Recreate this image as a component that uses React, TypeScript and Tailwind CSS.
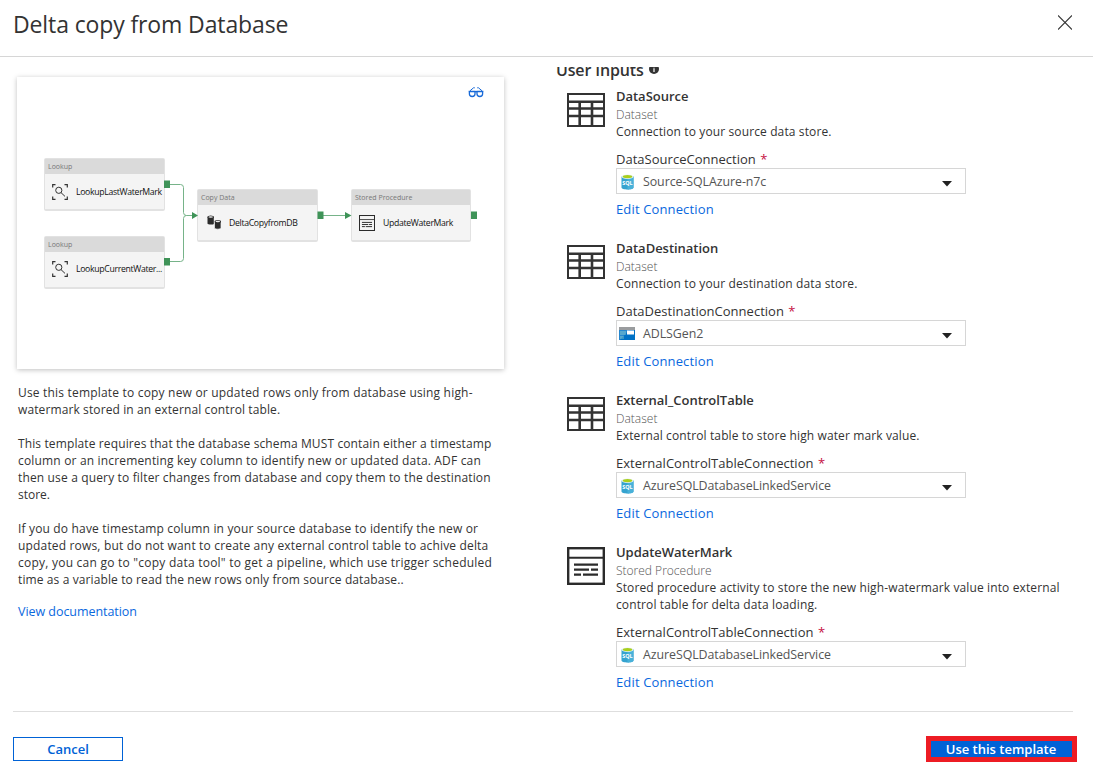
import React from "react";

const TableIcon = () => (
  <svg width="38" height="34" viewBox="0 0 38 34" fill="none" stroke="#333">
    <rect x="1" y="1" width="36" height="32" strokeWidth="2" />
    <path d="M0 8.800H38M0 15.500H38M0 23H38M12.700 8V34M25 8V34" strokeWidth="2.600" />
  </svg>
);

const ProcedureIcon = ({ size = 38 }: { size?: number }) => (
  <svg width={size} height={size} viewBox="0 0 38 38" fill="none" stroke="#2b2b2b" strokeWidth="2.4">
    <rect x="1.2" y="1.2" width="35.6" height="35.6" />
    <path d="M1 10.8H37" strokeWidth="2" />
    <path d="M7 17.6H31M7 22.6H22M24 22.6H31M7 27.6H14M16 27.6H31" strokeWidth="2.3" />
  </svg>
);

const SqlIcon = () => (
  <svg width="13" height="16" viewBox="0 0 13 16" className="ml-[4px] mr-[9px] mt-[2px]">
    <path d="M0.5 2.5V13.5C0.5 14.7 3.2 15.5 6.5 15.5S12.5 14.7 12.5 13.5V2.5Z" fill="#35a3cf" />
    <path d="M6.5 2.5V15.5C9.8 15.5 12.5 14.7 12.5 13.5V2.5Z" fill="#48b1d9" />
    <ellipse cx="6.5" cy="2.7" rx="6" ry="2.2" fill="#e6f1f3" />
    <ellipse cx="6.5" cy="2.6" rx="4.8" ry="1.6" fill="#a9cf1c" />
    <text x="6.5" y="10.8" textAnchor="middle" fontSize="5.4" fontWeight="700" fill="#fff" fontFamily="Open Sans, sans-serif">SQL</text>
  </svg>
);

const LakeIcon = () => (
  <svg width="16" height="13" viewBox="0 0 16 13" className="ml-[2px] mr-[8px] mt-px">
    <rect width="16" height="13" fill="#0072c6" />
    <rect width="16" height="3" fill="#9a9c9e" />
    <rect x="8" y="3.5" width="7" height="4" fill="#fff" />
    <rect x="1" y="4" width="6" height="4" fill="#3999c6" />
    <rect x="1" y="9" width="4" height="3" fill="#3999c6" />
    <path d="M0 13V3L10 3L1 13Z" fill="#fff" opacity=".15" />
  </svg>
);

const LookupIcon = () => (
  <svg width="16" height="16" viewBox="0 0 16 16" fill="none" stroke="#333" strokeWidth="1">
    <path d="M.7 3.5V.7H3.5M12.5.7H15.3V3.5M15.3 12.5V15.3H12.5M3.5 15.3H.7V12.5" strokeWidth="1.2" />
    <circle cx="6.8" cy="6.3" r="3.1" />
    <path d="M9 8.6L13 12.4" />
  </svg>
);

const CopyIcon = () => (
  <svg width="15" height="15" viewBox="0 0 15 15" fill="#2b2b2b">
    <path d="M.5 2V8.5C.5 9.8 6.5 10 6.8 8.7V2Z" />
    <ellipse cx="3.7" cy="2" rx="3.2" ry="1.5" />
    <ellipse cx="3.7" cy="2" rx="2.3" ry=".8" fill="#eee" />
    <path d="M7.5 6.5V13C7.5 14.5 14 14.5 14 13V6.5Z" stroke="#f4f4f4" strokeWidth=".7" />
    <ellipse cx="10.8" cy="6.5" rx="3.2" ry="1.5" />
    <ellipse cx="10.8" cy="6.5" rx="2.3" ry=".8" fill="#eee" />
  </svg>
);

const Node = ({ pos, kind, name, icon }: { pos: string; kind: string; name: string; icon: React.ReactNode }) => (
  <div className={`absolute rounded-[2px] border border-b-2 border-[#e2e2e2] bg-[#f4f4f4] ${pos}`}>
    <div className="h-[15px] bg-[#dadada] pl-[3px] text-[7px] leading-[15px] text-[#777]">{kind}</div>
    <div className="flex h-[35px] items-center pl-[7px]">
      <span className="flex w-[24px] shrink-0">{icon}</span>
      <span className="whitespace-nowrap pt-[2px] text-[8.7px] tracking-[-0.32px] text-[#111]">{name}</span>
    </div>
  </div>
);

interface InputProps {
  title: string;
  kind: string;
  desc: React.ReactNode;
  label: string;
  value: string;
  valueIcon: React.ReactNode;
  icon: React.ReactNode;
}

const InputBlock = ({ title, kind, desc, label, value, valueIcon, icon }: InputProps) => (
  <section className="flex pb-[22px]">
    <div className="w-[49px] shrink-0 pt-[5px]">{icon}</div>
    <div className="whitespace-nowrap">
      <h3 className="h-[18px] text-[13px] font-semibold leading-[17px] tracking-[-0.03px] text-[#333]">{title}</h3>
      <p className="h-[17px] text-[12px] font-light leading-[17px] text-[#555]">{kind}</p>
      <p className="text-[12px] leading-[17px] tracking-[0.12px] text-[#333]">{desc}</p>
      <div className="mt-[11px] h-[17px] text-[13px] leading-[17px] tracking-[0.02px] text-[#333]">
        {label} <span className="ml-[1px] text-[#c50f3f]">*</span>
      </div>
      <div className="flex h-[26px] w-[350px] items-center border border-[#d6d6d6]">
        {valueIcon}
        <span className="flex-1 text-[12.4px] leading-[17px] tracking-[-0.07px] text-[#555]">{value}</span>
        <svg width="10" height="6" viewBox="0 0 10 6" className="mr-[13px] mt-[5px]">
          <path d="M0 0H10L5 5.5Z" fill="#222" />
        </svg>
      </div>
      <a className="mt-[7px] block text-[13px] leading-[17px] tracking-[0.14px] text-[#0a68de]">Edit Connection</a>
    </div>
  </section>
);

export default function App() {
  return (
    <div className="flex h-[779px] w-[1093px] flex-col overflow-hidden bg-white font-['Open_Sans','Noto_Sans',sans-serif]">
      <header className="flex h-[57px] shrink-0 items-center justify-between border-b border-[#d6d6d6] pb-[8px] pl-[13px] pr-[21px]">
        <h1 className="whitespace-nowrap text-[23px] leading-[32px] tracking-[-0.12px] text-[#333]">Delta copy from Database</h1>
        <svg width="14" height="15" viewBox="0 0 14 15" stroke="#333" strokeWidth="1.1" className="mb-[3px]">
          <path d="M0 .5L14 14.5M14 .5L0 14.5" />
        </svg>
      </header>

      <main className="flex h-[654px] shrink-0">
        <div className="w-[556px] shrink-0 pl-[17px] pt-[20px]">
          <div className="relative h-[292px] w-[487px] bg-white shadow-[0_1px_5px_rgba(0,0,0,0.25)]">
            <svg className="absolute left-[451px] top-[10px]" width="16" height="11" viewBox="0 0 16 11" fill="none" stroke="#1769d8" strokeWidth="1.3">
              <path d="M.6 4.5H7V7C7 10.3 1.4 10.3 1.4 7V4.5M15.4 4.5H9V7C9 10.3 14.6 10.3 14.6 7V4.5M7 5C7.5 4.4 8.5 4.4 9 5" />
              <path d="M2 3.8L5.5.8H6.8M14 3.8L10.5.8H9.2" strokeWidth="1" />
            </svg>
            <Node pos="left-[27px] top-[81px] w-[121px]" kind="Lookup" name="LookupLastWaterMark" icon={<LookupIcon />} />
            <Node pos="left-[27px] top-[158.500px] w-[121px]" kind="Lookup" name="LookupCurrentWater..." icon={<LookupIcon />} />
            <Node pos="left-[180px] top-[112px] w-[121px]" kind="Copy Data" name="DeltaCopyfromDB" icon={<span className="pl-[2px]"><CopyIcon /></span>} />
            <Node pos="left-[334px] top-[112px] w-[120px]" kind="Stored Procedure" name="UpdateWaterMark" icon={<ProcedureIcon size={16} />} />
            <svg className="absolute left-0 top-0" width="487" height="292" viewBox="0 0 487 292" fill="none" stroke="#76b389">
              <path d="M153 107.5H163.500Q166.500 107.500 166.500 110.500V135.500Q166.500 138.500 169.500 138.500H175M153 184.500H163.500Q166.500 184.500 166.500 181.500V141.500Q166.500 138.500 169.500 138.500M306 138.500H328" />
              <g fill="#3f9358" stroke="none">
                <path d="M147 103.500h6v7.500h-6zM147 181h6v7.500h-6zM300.500 134.500h6v7.500h-6zM454 134.500h6v7.500h-6zM175 135L181 138.500L175 142zM328 135L334.500 138.500L328 142z" />
              </g>
            </svg>
          </div>
          <div className="mt-[15px] whitespace-nowrap pl-px text-[12px] leading-[17px] text-[#333]">
            <p>
              <span className="tracking-[0.19px]">Use this template to copy new or updated rows only from database using high-</span>
              <br />
              <span className="tracking-[0.11px]">watermark stored in an external control table.</span>
            </p>
            <p className="mt-[17px]">
              <span className="tracking-[0.12px]">This template requires that the database schema MUST contain either a timestamp</span>
              <br />
              <span className="tracking-[0.17px]">column or an incrementing key column to identify new or updated data. ADF can</span>
              <br />
              <span className="tracking-[0.15px]">then use a query to filter changes from database and copy them to the destination</span>
              <br />
              store.
            </p>
            <p className="mt-[17px]">
              <span className="tracking-[0.165px]">If you do have timestamp column in your source database to identify the new or</span>
              <br />
              <span className="tracking-[0.17px]">updated rows, but do not want to create any external control table to achive delta</span>
              <br />
              <span className="tracking-[0.235px]">copy, you can go to "copy data tool" to get a pipeline, which use trigger scheduled</span>
              <br />
              <span className="tracking-[0.11px]">time as a variable to read the new rows only from source database..</span>
            </p>
            <a className="mt-[15px] block text-[12.5px] tracking-[-0.05px] text-[#0a68de]">View documentation</a>
          </div>
        </div>

        <div className="mt-[10px] flex-1 overflow-hidden">
          <h2 className="-mt-[8px] flex h-[29px] items-start whitespace-nowrap text-[16px] font-semibold leading-[22px] tracking-[-0.15px] text-[#333]">
            User Inputs
            <svg width="10" height="10" viewBox="0 0 10 10" className="ml-[5px] mt-[5px]">
              <circle cx="5" cy="5" r="5" fill="#333" />
              <path d="M5 2V3.200M5 4.200V8" stroke="#fff" strokeWidth="1.2" />
            </svg>
          </h2>
          <div className="pl-[11px]">
            <InputBlock title="DataSource" kind="Dataset" desc="Connection to your source data store." label="DataSourceConnection" value="Source-SQLAzure-n7c" valueIcon={<SqlIcon />} icon={<TableIcon />} />
            <InputBlock title="DataDestination" kind="Dataset" desc="Connection to your destination data store." label="DataDestinationConnection" value="ADLSGen2" valueIcon={<LakeIcon />} icon={<TableIcon />} />
            <InputBlock title="External_ControlTable" kind="Dataset" desc="External control table to store high water mark value." label="ExternalControlTableConnection" value="AzureSQLDatabaseLinkedService" valueIcon={<SqlIcon />} icon={<TableIcon />} />
            <InputBlock
              title="UpdateWaterMark"
              kind="Stored Procedure"
              desc={<>Stored procedure activity to store the new high-watermark value into external<br />control table for delta data loading.</>}
              label="ExternalControlTableConnection"
              value="AzureSQLDatabaseLinkedService"
              valueIcon={<SqlIcon />}
              icon={<div className="-mt-[2px]"><ProcedureIcon /></div>}
            />
          </div>
        </div>
      </main>

      <footer className="ml-[13px] flex w-[1064px] flex-1 flex-col">
        <div className="h-px w-[1060px] bg-[#dedede]" />
        <div className="flex items-start justify-between pt-[24px]">
          <button className="mt-px h-[24px] w-[110px] border border-[#0062d6] text-[13px] font-semibold leading-[20px] text-[#0062d6]">Cancel</button>
          <button className="h-[26px] w-[151px] whitespace-nowrap border-[5px] border-[#ed1c24] bg-[#0062d6] pr-px text-[13px] font-semibold leading-[16px] text-white">Use this template</button>
        </div>
      </footer>
    </div>
  );
}
